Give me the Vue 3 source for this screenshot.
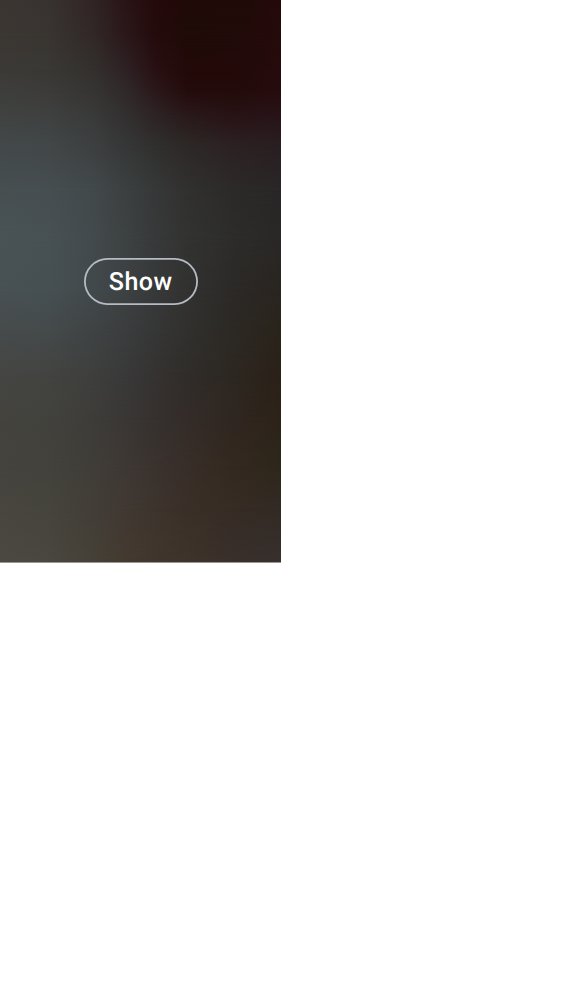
<script setup>
const columns = [0, 47, 94, 125, 156, 187, 234, 281]
const rows = [
  { y: 0, colors: ['#3b3632', '#383330', '#312524', '#2a1416', '#250a0a', '#1f0a08', '#1f0b08', '#250a0a'] },
  { y: 35, colors: ['#3b3733', '#393531', '#312827', '#2b181b', '#240b0c', '#1f0b08', '#200b09', '#250b0b'] },
  { y: 70, colors: ['#3c3a37', '#3a3835', '#33302e', '#2e2224', '#281013', '#220a09', '#220a09', '#260b0d'] },
  { y: 90, colors: ['#3e3e3c', '#3c3b39', '#363432', '#30292a', '#2b171a', '#240b0b', '#230b0a', '#260c0e'] },
  { y: 112, colors: ['#404240', '#3e403f', '#393938', '#322f2f', '#2d2223', '#291719', '#271113', '#271317'] },
  { y: 145, colors: ['#434849', '#424748', '#3d3f40', '#363737', '#302f2e', '#2d2827', '#2c2123', '#291e21'] },
  { y: 190, colors: ['#474f51', '#464e50', '#42494b', '#3c4041', '#363838', '#31312f', '#2c2a29', '#292627'] },
  { y: 240, colors: ['#495356', '#485154', '#434a4c', '#3d4243', '#373939', '#323331', '#2d2c2a', '#2a2726'] },
  { y: 290, colors: ['#485154', '#465052', '#42494b', '#3d4243', '#373939', '#323230', '#2c2927', '#292520'] },
  { y: 330, colors: ['#474b4c', '#454a4b', '#3f4344', '#3b3d3e', '#363636', '#31302e', '#2c2924', '#2a241b'] },
  { y: 375, colors: ['#454643', '#434441', '#3e3f3d', '#393939', '#353231', '#302d2a', '#2d2721', '#2a2118'] },
  { y: 420, colors: ['#44433e', '#42423d', '#3e3c39', '#3a3735', '#36312e', '#342c29', '#302621', '#2c2318'] },
  { y: 465, colors: ['#45433e', '#43423c', '#403d38', '#3e3834', '#3a322e', '#382e29', '#33291f', '#2e261b'] },
  { y: 510, colors: ['#48463f', '#46443d', '#423e37', '#413833', '#3d342d', '#3a3028', '#362c25', '#332a24'] },
  { y: 562, colors: ['#4b4941', '#49473f', '#454037', '#443a2f', '#40362d', '#3d332a', '#392f2b', '#37302e'] },
]

const bands = rows.map((row, i) => {
  const stops = row.colors.map((color, c) => `${color} ${columns[c]}px`)
  const mask = i ? `linear-gradient(transparent ${rows[i - 1].y}px, #000 ${row.y}px)` : 'none'
  return { backgroundImage: `linear-gradient(90deg, ${stops.join(', ')})`, maskImage: mask }
})
</script>

<template>
  <main class="page">
    <section class="preview">
      <div v-for="(band, i) in bands" :key="i" class="band" :style="band"></div>
      <button class="show" type="button">Show</button>
    </section>
  </main>
</template>

<style>
body {
  margin: 0;
  background: #fff;
}
</style>

<style scoped>
.page {
  min-height: 1000px;
}
.preview {
  position: relative;
  box-sizing: border-box;
  width: 281px;
  height: 563px;
  display: flex;
  align-items: center;
  justify-content: center;
  border-bottom: 1px solid #9b9793;
}
.band {
  position: absolute;
  inset: 0;
}
.show {
  position: relative;
  box-sizing: border-box;
  width: 114px;
  height: 47px;
  padding: 2px 0 0;
  border: 0;
  border-radius: 24px;
  background: transparent;
  box-shadow: inset 0 0 0 1.8px #b5bac4;
  color: #fff;
  font: 500 25px/45px Roboto, sans-serif;
  letter-spacing: 0.5px;
  text-indent: 0.4px;
  text-rendering: geometricPrecision;
}
</style>
